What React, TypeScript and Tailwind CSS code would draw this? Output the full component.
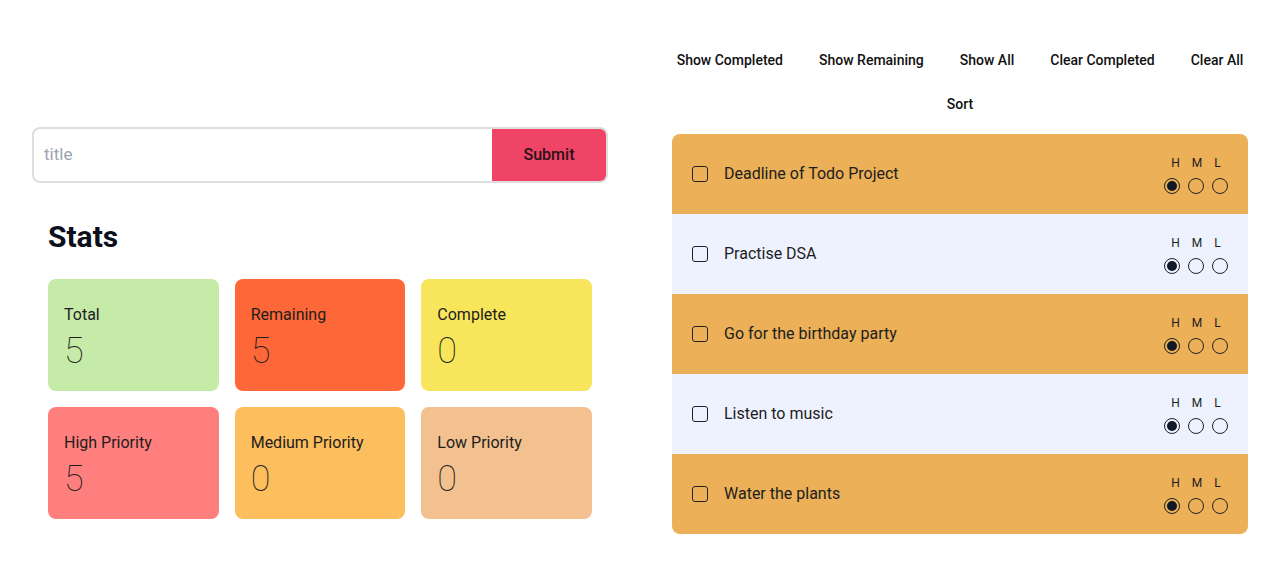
import { useState } from 'react';

type Todo = { id: number; title: string; done: boolean; priority: 'H' | 'M' | 'L' };

const initialTodos: Todo[] = [
  { id: 1, title: 'Deadline of Todo Project', done: false, priority: 'H' },
  { id: 2, title: 'Practise DSA', done: false, priority: 'H' },
  { id: 3, title: 'Go for the birthday party', done: false, priority: 'H' },
  { id: 4, title: 'Listen to music', done: false, priority: 'H' },
  { id: 5, title: 'Water the plants', done: false, priority: 'H' },
];

const actions = ['Show Completed', 'Show Remaining', 'Show All', 'Clear Completed', 'Clear All'];

function StatCard({ label, value, color }: { label: string; value: number; color: string }) {
  return (
    <div className={`flex h-28 flex-col rounded-lg px-4 pt-6 ${color}`}>
      <span className="text-base leading-6 text-[#1d1d1d]">{label}</span>
      <span className="mt-[4px] text-[36px] font-thin leading-10 text-[#1d1d1d]">{value}</span>
    </div>
  );
}

function PriorityPicker({ value }: { value: Todo['priority'] }) {
  return (
    <div className="flex flex-col items-center">
      <div className="flex gap-[12px] text-xs leading-4 text-[#1d1d1d]">
        <span>H</span>
        <span>M</span>
        <span>L</span>
      </div>
      <div className="mt-[7px] flex gap-2">
        {(['H', 'M', 'L'] as const).map((p) => (
          <span key={p} className="flex h-4 w-4 items-center justify-center rounded-full border border-[#222]">
            {value === p && <span className="h-[10px] w-[10px] rounded-full bg-[#111827]" />}
          </span>
        ))}
      </div>
    </div>
  );
}

export default function App() {
  const [todos] = useState(initialTodos);
  const total = todos.length;
  const complete = todos.filter((t) => t.done).length;

  return (
    <div className="grid min-h-[576px] grid-cols-2 items-start gap-16 bg-white px-8 font-['Roboto',sans-serif]">
      <div className="pt-[127px]">
        <div className="flex h-14 overflow-hidden rounded-lg border-2 border-[#dedede]">
          <input
            placeholder="title"
            className="flex-1 px-[10px] text-[17px] text-gray-800 outline-none placeholder:text-[#9ca3af]"
          />
          <button className="w-[114px] bg-[#ef4466] text-base font-medium text-[#2b1118]">Submit</button>
        </div>

        <div className="px-4">
          <h2 className="mt-9 text-3xl font-bold leading-9 text-[#0b0f1a]">Stats</h2>
          <div className="mt-6 grid grid-cols-3 gap-4">
            <StatCard label="Total" value={total} color="bg-[#c6eaa8]" />
            <StatCard label="Remaining" value={total - complete} color="bg-[#fe6839]" />
            <StatCard label="Complete" value={complete} color="bg-[#f7e55c]" />
            <StatCard label="High Priority" value={todos.filter((t) => t.priority === 'H').length} color="bg-[#ff7f7e]" />
            <StatCard label="Medium Priority" value={todos.filter((t) => t.priority === 'M').length} color="bg-[#fdbe5d]" />
            <StatCard label="Low Priority" value={todos.filter((t) => t.priority === 'L').length} color="bg-[#f2c18f]" />
          </div>
        </div>
      </div>

      <div className="pt-[42px]">
        <div className="flex justify-center gap-9">
          {actions.map((a) => (
            <button key={a} className="py-2 text-sm font-medium leading-5 text-[#111]">
              {a}
            </button>
          ))}
        </div>
        <div className="mt-2 flex justify-center">
          <button className="py-2 text-sm font-medium leading-5 text-[#111]">Sort</button>
        </div>

        <ul className="mt-3 overflow-hidden rounded-lg">
          {todos.map((todo, i) => (
            <li
              key={todo.id}
              className={`flex h-20 items-center px-5 ${i % 2 === 0 ? 'bg-[#ebb058]' : 'bg-[#eef2ff]'}`}
            >
              <span className="h-4 w-4 rounded-[3px] border border-[#222]" />
              <span className="ml-4 flex-1 text-base text-[#1d1d1d]">{todo.title}</span>
              <PriorityPicker value={todo.priority} />
            </li>
          ))}
        </ul>
      </div>
    </div>
  );
}
